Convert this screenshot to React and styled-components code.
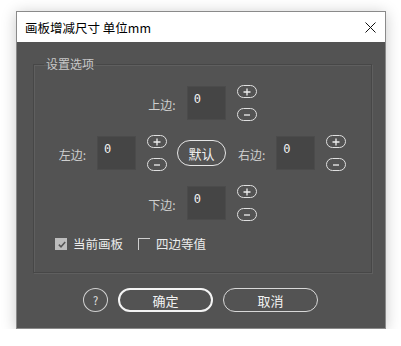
import React from "react";
import styled, { createGlobalStyle } from "styled-components";

const Global = createGlobalStyle`
  html, body { margin: 0; padding: 0; background: #ffffff; }
  body { font-family: "Noto Sans CJK SC", "Noto Sans", sans-serif; }
`;

const Page = styled.div`
  padding: 11px 0 0 16px;
`;

const Dialog = styled.div`
  width: 368px;
  height: 316px;
  border: 1px solid #8a8a8a;
  box-shadow: 0 2px 14px rgba(0, 0, 0, 0.22);
  display: flex;
  flex-direction: column;
  background: #535353;
`;

const TitleBar = styled.div`
  height: 30px;
  background: #ffffff;
  display: flex;
  align-items: center;
  justify-content: space-between;
  padding: 0 9px 0 8px;
`;

const Title = styled.div`
  font-size: 12.5px;
  color: #000;
`;

const Close = styled.svg`
  width: 11px;
  height: 11px;
`;

const Body = styled.div`
  flex: 1;
  display: flex;
  flex-direction: column;
  padding: 14px 13px 16px 16px;
`;

const Group = styled.fieldset`
  margin: 0;
  height: 217px;
  box-sizing: border-box;
  padding: 12px 0 0 0;
  border: 1px solid #474747;
  box-shadow: inset 1px 1px 0 #5f5f5f, 1px 1px 0 #5f5f5f;
  display: flex;
  flex-direction: column;
  align-items: center;
  gap: 12px;
`;

const Legend = styled.legend`
  margin-left: 10px;
  padding: 0 2px;
  font-size: 12px;
  color: #c8c8c8;
  line-height: 16px;
`;

const Row = styled.div`
  display: flex;
  align-items: center;
  height: 38px;
`;

const Side = styled.div`
  display: flex;
  align-items: center;
`;

const Label = styled.span`
  font-size: 12px;
  color: #cfcfcf;
  margin-right: 11px;
  margin-top: 3px;
`;

const ValueBox = styled.div`
  width: 39px;
  height: 34px;
  box-sizing: border-box;
  background: #454545;
  border: 1px solid #4b4b4b;
  color: #f0f0f0;
  font-size: 12px;
  font-family: "DejaVu Sans Mono", monospace;
  padding: 5px 0 0 6px;
`;

const Stepper = styled.div`
  display: flex;
  flex-direction: column;
  gap: 10px;
  margin-left: 11px;
`;

const Pill = styled.div`
  width: 20px;
  height: 13px;
  box-sizing: border-box;
  border: 1.5px solid #e0e0e0;
  border-radius: 7px;
  display: flex;
  align-items: center;
  justify-content: center;
`;

const Sym = styled.svg`
  width: 8px;
  height: 8px;
`;

const DefaultBtn = styled.div`
  width: 49px;
  height: 26px;
  box-sizing: border-box;
  border: 1.5px solid #e6e6e6;
  border-radius: 13px;
  color: #f0f0f0;
  font-size: 13px;
  display: flex;
  align-items: center;
  justify-content: center;
  margin: 0 12px 0 10px;
`;

const CheckRow = styled.div`
  align-self: flex-start;
  display: flex;
  align-items: center;
  padding-left: 21px;
  margin-top: 0px;
`;

const Box = styled.div`
  width: 12px;
  height: 12px;
  box-sizing: border-box;
  background: ${(p) => (p.$checked ? "#bdbdbd" : "transparent")};
  border-top: 1px solid ${(p) => (p.$checked ? "#bdbdbd" : "#cfcfcf")};
  border-left: 1px solid ${(p) => (p.$checked ? "#bdbdbd" : "#cfcfcf")};
  display: flex;
  align-items: center;
  justify-content: center;
  margin-right: 6px;
`;

const CheckText = styled.span`
  font-size: 12.5px;
  color: #ececec;
  margin-right: ${(p) => p.$mr || 0}px;
`;

const Buttons = styled.div`
  margin-top: auto;
  display: flex;
  justify-content: center;
  align-items: center;
  gap: 10px;
  padding-right: 4px;
`;

const Help = styled.div`
  width: 25px;
  height: 24px;
  box-sizing: border-box;
  border: 1px solid #d0d0d0;
  border-radius: 50%;
  color: #e6e6e6;
  font-size: 11px;
  display: flex;
  align-items: center;
  justify-content: center;
`;

const Btn = styled.div`
  width: 95px;
  height: 24px;
  box-sizing: border-box;
  border: ${(p) => (p.$primary ? "2px solid #f4f4f4" : "1px solid #d8d8d8")};
  border-radius: 12px;
  color: #f2f2f2;
  font-size: 13px;
  display: flex;
  align-items: center;
  justify-content: center;
`;

const Plus = () => (
  <Sym viewBox="0 0 8 8">
    <path d="M4 0.5V7.5M0.5 4H7.5" stroke="#eee" strokeWidth="1.3" fill="none" />
  </Sym>
);
const Minus = () => (
  <Sym viewBox="0 0 8 8">
    <path d="M1 4H7" stroke="#eee" strokeWidth="1.3" fill="none" />
  </Sym>
);

const Field = ({ label }) => (
  <Side>
    <Label>{label}:</Label>
    <ValueBox>0</ValueBox>
    <Stepper>
      <Pill><Plus /></Pill>
      <Pill><Minus /></Pill>
    </Stepper>
  </Side>
);

export default function App() {
  return (
    <>
      <Global />
      <Page>
        <Dialog>
          <TitleBar>
            <Title>画板增减尺寸 单位mm</Title>
            <Close viewBox="0 0 11 11">
              <path d="M0.5 0.5L10.5 10.5M10.5 0.5L0.5 10.5" stroke="#111" strokeWidth="1" fill="none" />
            </Close>
          </TitleBar>
          <Body>
            <Group>
              <Legend>设置选项</Legend>
              <Row>
                <Field label="上边" />
              </Row>
              <Row>
                <Field label="左边" />
                <DefaultBtn>默认</DefaultBtn>
                <Field label="右边" />
              </Row>
              <Row>
                <Field label="下边" />
              </Row>
              <CheckRow>
                <Box $checked>
                  <svg width="8" height="7" viewBox="0 0 8 7">
                    <path d="M0.8 3.6L3 5.8L7.2 1" stroke="#555" strokeWidth="1.5" fill="none" />
                  </svg>
                </Box>
                <CheckText $mr={15}>当前画板</CheckText>
                <Box />
                <CheckText>四边等值</CheckText>
              </CheckRow>
            </Group>
            <Buttons>
              <Help>?</Help>
              <Btn $primary>确定</Btn>
              <Btn>取消</Btn>
            </Buttons>
          </Body>
        </Dialog>
      </Page>
    </>
  );
}
